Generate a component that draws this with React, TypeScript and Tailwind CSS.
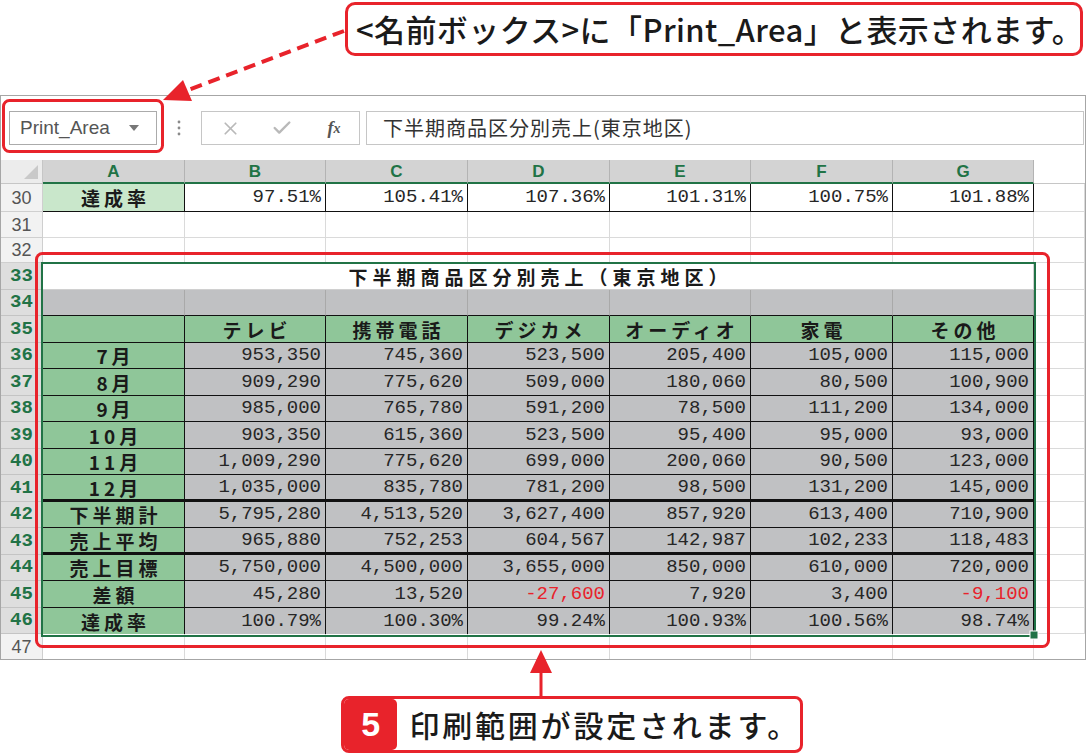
import { X, Check } from "lucide-react";

const GRID = "grid grid-cols-[42px_142px_141px_142px_142px_141px_142px_141px_1fr]";
const JP = "font-['Noto_Sans_CJK_JP',sans-serif]";
const NUM = "flex items-center justify-end pr-[4px] leading-none font-['Liberation_Mono',monospace] text-[19px] text-[#262626]";
const LABEL = `flex items-center justify-center pl-[4px] leading-none ${JP} font-bold text-[19px] tracking-[4px] text-[#1a1a1a]`;
// black cell rules
const RULE = "border-solid border-r border-b border-[#111]";

const COLS = ["A", "B", "C", "D", "E", "F", "G"];
const HEADS = ["テレビ", "携帯電話", "デジカメ", "オーディオ", "家電", "その他"];

const DATA = [
  { n: 36, label: "7月", v: ["953,350", "745,360", "523,500", "205,400", "105,000", "115,000"], h: "h-[26px]", b: "" },
  { n: 37, label: "8月", v: ["909,290", "775,620", "509,000", "180,060", "80,500", "100,900"], h: "h-[27px]", b: "" },
  { n: 38, label: "9月", v: ["985,000", "765,780", "591,200", "78,500", "111,200", "134,000"], h: "h-[26px]", b: "" },
  { n: 39, label: "10月", v: ["903,350", "615,360", "523,500", "95,400", "95,000", "93,000"], h: "h-[27px]", b: "" },
  { n: 40, label: "11月", v: ["1,009,290", "775,620", "699,000", "200,060", "90,500", "123,000"], h: "h-[26px]", b: "" },
  { n: 41, label: "12月", v: ["1,035,000", "835,780", "781,200", "98,500", "131,200", "145,000"], h: "h-[27px]", b: "border-b-[3px]" },
  { n: 42, label: "下半期計", v: ["5,795,280", "4,513,520", "3,627,400", "857,920", "613,400", "710,900"], h: "h-[26px]", b: "" },
  { n: 43, label: "売上平均", v: ["965,880", "752,253", "604,567", "142,987", "102,233", "118,483"], h: "h-[27px]", b: "border-b-[3px] border-b-double" },
  { n: 44, label: "売上目標", v: ["5,750,000", "4,500,000", "3,655,000", "850,000", "610,000", "720,000"], h: "h-[26px]", b: "" },
  { n: 45, label: "差額", v: ["45,280", "13,520", "-27,600", "7,920", "3,400", "-9,100"], h: "h-[27px]", b: "" },
  { n: 46, label: "達成率", v: ["100.79%", "100.30%", "99.24%", "100.93%", "100.56%", "98.74%"], h: "h-[26px]", b: "border-b-0" },
];

function RowHead({ n, sel }: { n: number; sel?: boolean }) {
  if (sel) {
    return (
      <div className="flex items-center justify-center leading-none bg-[#dedede] border-r border-b border-[#c4c4c4] font-['Liberation_Mono',monospace] font-bold text-[19px] text-[#217346]">
        {n}
      </div>
    );
  }
  return (
    <div className="flex items-center justify-center leading-none bg-[#f2f2f2] border-r border-b border-[#cfcfcf] font-['Liberation_Sans_Narrow','Liberation_Sans',sans-serif] text-[18px] text-[#555]">
      {n}
    </div>
  );
}

const Blank = () => <div className="bg-white border-r border-b border-[#dadada]" />;

function Overlay() {
  return (
    <svg className="absolute left-0 top-0 pointer-events-none" width="1086" height="756">
      {/* name box callout arrow */}
      <line x1="344" y1="31" x2="188" y2="90" stroke="#e8232b" strokeWidth="4" strokeDasharray="12 7" />
      <polygon points="163,100 183,80 192,101" fill="#e8232b" />
      {/* bottom arrow */}
      <line x1="541" y1="697" x2="541" y2="668" stroke="#e8232b" strokeWidth="3" />
      <polygon points="541,650 530,673 552,673" fill="#e8232b" />
      {/* red frames */}
      <rect x="3.5" y="100.5" width="159" height="51" rx="6" fill="none" stroke="#e8232b" strokeWidth="3" />
      <rect x="36.5" y="253.5" width="1012" height="393" rx="6" fill="none" stroke="#e8232b" strokeWidth="3" />
      {/* selection */}
      <rect x="42" y="263" width="993" height="373" fill="none" stroke="#217346" strokeWidth="2" />
      <rect x="1030" y="631" width="8" height="8" fill="#217346" stroke="#fff" strokeWidth="1" />
    </svg>
  );
}

export default function App() {
  return (
    <div className="relative w-[1086px] h-[756px] bg-white overflow-hidden">
      {/* top callout */}
      <div className="h-[95px] flex justify-end pt-[2px] pr-[3px]">
        <div className={`w-[738px] h-[54px] border-[3px] border-[#e8232b] rounded-[10px] bg-white flex items-center pl-[8px] ${JP} font-medium text-[31px] tracking-[0.4px] text-[#1a1a1a] whitespace-nowrap`}>
          &lt;名前ボックス&gt;に「Print_Area」と表示されます。
        </div>
      </div>

      {/* excel window */}
      <div className="border-t border-l border-r border-b border-[#a6a6a6]">
        {/* formula bar */}
        <div className="h-[64px] flex items-start pt-[15px] pl-[8px] pr-[1px]">
          <div className="w-[148px] h-[34px] border border-[#ababab] flex items-center justify-between pl-[10px] pr-[17px]">
            <span className="font-['Liberation_Sans',sans-serif] text-[19px] text-[#555]">Print_Area</span>
            <svg width="10" height="6">
              <polygon points="0,0 10,0 5,6" fill="#777" />
            </svg>
          </div>
          <div className="w-[44px] h-[34px] flex items-center justify-center">
            <svg width="4" height="18">
              <circle cx="2" cy="3" r="1.4" fill="#8a8a8a" />
              <circle cx="2" cy="9" r="1.4" fill="#8a8a8a" />
              <circle cx="2" cy="15" r="1.4" fill="#8a8a8a" />
            </svg>
          </div>
          <div className="w-[159px] h-[34px] border border-[#c6c6c6] grid grid-cols-[52px_52px_52px] pl-[2px]">
            <div className="flex items-center justify-center">
              <X size={21} strokeWidth={2} color="#b9b9b9" />
            </div>
            <div className="flex items-center justify-center">
              <Check size={22} strokeWidth={2.6} color="#b9b9b9" />
            </div>
            <div className="flex items-center justify-center font-['Liberation_Serif',serif] italic font-bold text-[#555]">
              <span className="text-[18px]">f</span>
              <span className="text-[14px]">x</span>
            </div>
          </div>
          <div className="ml-[6px] flex-1 h-[34px] border border-[#c6c6c6] flex items-center pl-[16px]">
            <span className={`${JP} text-[20px] tracking-[1px] text-[#333]`}>下半期商品区分別売上(東京地区)</span>
          </div>
        </div>

        {/* column headers */}
        <div className={`${GRID} h-[24px]`}>
          <div className="relative bg-[#ececec] border-r border-b border-[#c6c6c6]">
            <svg className="absolute right-[4px] bottom-[4px]" width="14" height="14">
              <polygon points="0,14 14,14 14,0" fill="#c9c9c9" />
            </svg>
          </div>
          {COLS.map((c) => (
            <div
              key={c}
              className="flex items-center justify-center leading-none bg-[#d3d3d3] border-r border-[#b3b3b3] border-b-2 border-b-[#217346] font-['Liberation_Sans_Narrow','Liberation_Sans',sans-serif] font-bold text-[17px] text-[#217346]"
            >
              {c}
            </div>
          ))}
          <div className="bg-white border-b border-[#c6c6c6]" />
        </div>

        {/* row 30 */}
        <div className={`${GRID} h-[28px]`}>
          <RowHead n={30} />
          <div className={`${LABEL} bg-[#c9e7cb] ${RULE}`}>達成率</div>
          {["97.51%", "105.41%", "107.36%", "101.31%", "100.75%", "101.88%"].map((v) => (
            <div key={v} className={`${NUM} bg-white ${RULE}`}>
              {v}
            </div>
          ))}
          <Blank />
        </div>

        {/* rows 31, 32 */}
        {[31, 32].map((n) => (
          <div key={n} className={`${GRID} ${n === 31 ? "h-[26px]" : "h-[25px]"}`}>
            <RowHead n={n} />
            {COLS.map((c) => (
              <Blank key={c} />
            ))}
            <Blank />
          </div>
        ))}

        {/* row 33 title */}
        <div className={`${GRID} h-[27px]`}>
          <RowHead n={33} sel />
          <div className={`col-span-7 flex items-center justify-center pl-[5px] leading-none bg-white border-r border-b border-[#d0d0d0] ${JP} font-bold text-[19px] tracking-[5px] text-[#1a1a1a]`}>
            下半期商品区分別売上（東京地区）
          </div>
          <Blank />
        </div>

        {/* row 34 */}
        <div className={`${GRID} h-[26px]`}>
          <RowHead n={34} sel />
          {COLS.map((c) => (
            <div key={c} className="bg-[#c0c1c3] border-r border-r-[#a9a9a9] border-b border-b-[#111]" />
          ))}
          <Blank />
        </div>

        {/* row 35 headers */}
        <div className={`${GRID} h-[27px]`}>
          <RowHead n={35} sel />
          <div className={`bg-[#8fc699] ${RULE}`} />
          {HEADS.map((h) => (
            <div key={h} className={`${LABEL} bg-[#8fc699] ${RULE}`}>
              {h}
            </div>
          ))}
          <Blank />
        </div>

        {/* data rows */}
        {DATA.map((r) => (
          <div key={r.n} className={`${GRID} ${r.h}`}>
            <RowHead n={r.n} sel />
            <div className={`${LABEL} bg-[#8fc699] ${RULE} ${r.b}`}>{r.label}</div>
            {r.v.map((v, i) => (
              <div
                key={i}
                className={`${NUM} bg-[#c0c1c3] ${RULE} ${r.b} ${v.startsWith("-") ? "text-[#e8232b]" : ""}`}
              >
                {v}
              </div>
            ))}
            <Blank />
          </div>
        ))}

        {/* row 47 */}
        <div className={`${GRID} h-[25px]`}>
          <div className="flex items-center justify-center leading-none bg-[#f2f2f2] border-r border-[#cfcfcf] font-['Liberation_Sans_Narrow','Liberation_Sans',sans-serif] text-[18px] text-[#555]">
            47
          </div>
          {COLS.map((c) => (
            <div key={c} className="bg-white border-r border-[#dadada]" />
          ))}
          <div className="bg-white" />
        </div>
      </div>

      {/* bottom callout */}
      <div className="h-[95px] pt-[36px] pl-[341px]">
        <div className="w-[462px] h-[57px] border-[3px] border-[#e8232b] rounded-[8px] bg-white flex items-center overflow-hidden">
          <div className="w-[56px] h-full bg-[#e8232b] rounded-r-[5px] flex items-center justify-center font-['Liberation_Sans',sans-serif] font-bold text-[34px] text-white">
            5
          </div>
          <span className={`ml-[12px] ${JP} font-medium text-[30px] tracking-[2.8px] text-[#1a1a1a] whitespace-nowrap`}>
            印刷範囲が設定されます。
          </span>
        </div>
      </div>

      <Overlay />
    </div>
  );
}
